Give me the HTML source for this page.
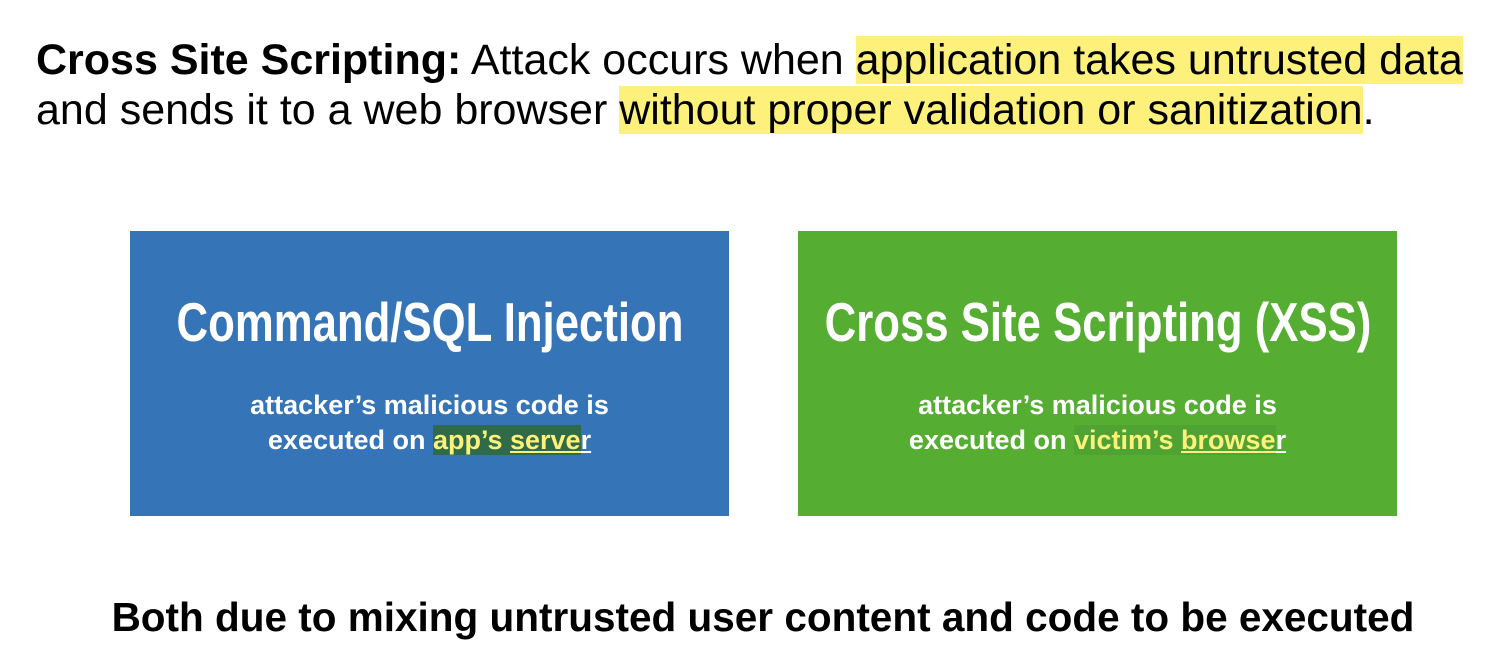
<!DOCTYPE html>
<html><head><meta charset="utf-8"><style>
body{margin:0;width:1498px;height:660px;background:#fff;font-family:"Liberation Sans",Arial,sans-serif;position:relative;overflow:hidden}
.hd{position:absolute;left:36px;top:35px;font-size:43px;line-height:50px;color:#000;white-space:nowrap}
.hl{background:#fdf17c}
.box{position:absolute;top:231px;width:599px;height:285px;color:#fff;text-align:center;overflow:hidden}
.t{position:absolute;left:50%;top:59px;font-weight:bold;font-size:55px;line-height:64px;white-space:nowrap;transform:translateX(-50%) scaleX(.795)}
.s{position:absolute;left:0;right:0;top:157px;font-weight:bold;font-size:27px;line-height:35px;white-space:nowrap}
.y{color:#fdf17c}
.bt{position:absolute;left:0;width:1526px;text-align:center;top:594px;font-weight:bold;font-size:40.5px;line-height:46px;white-space:nowrap}
</style></head><body>
<div class="hd"><b>Cross Site Scripting:</b> Attack occurs when <span class="hl">application takes untrusted data</span><br>and sends it to a web browser <span class="hl">without proper validation or sanitization</span>.</div>
<div class="box" style="left:130px;background:#3574b7">
<div class="t">Command/SQL Injection</div>
<div class="s">attacker’s malicious code is<br>executed on <span style="background:#2f6b48"><span class="y">app’s <u>serve</u></span></span><u>r</u></div>
</div>
<div class="box" style="left:798px;background:#55ad32">
<div class="t">Cross Site Scripting (XSS)</div>
<div class="s">attacker’s malicious code is<br>executed on <span style="background:#4ea333"><span class="y">victim’s <u>browse</u></span></span><u>r</u></div>
</div>
<div class="bt">Both due to mixing untrusted user content and code to be executed</div>
</body></html>
